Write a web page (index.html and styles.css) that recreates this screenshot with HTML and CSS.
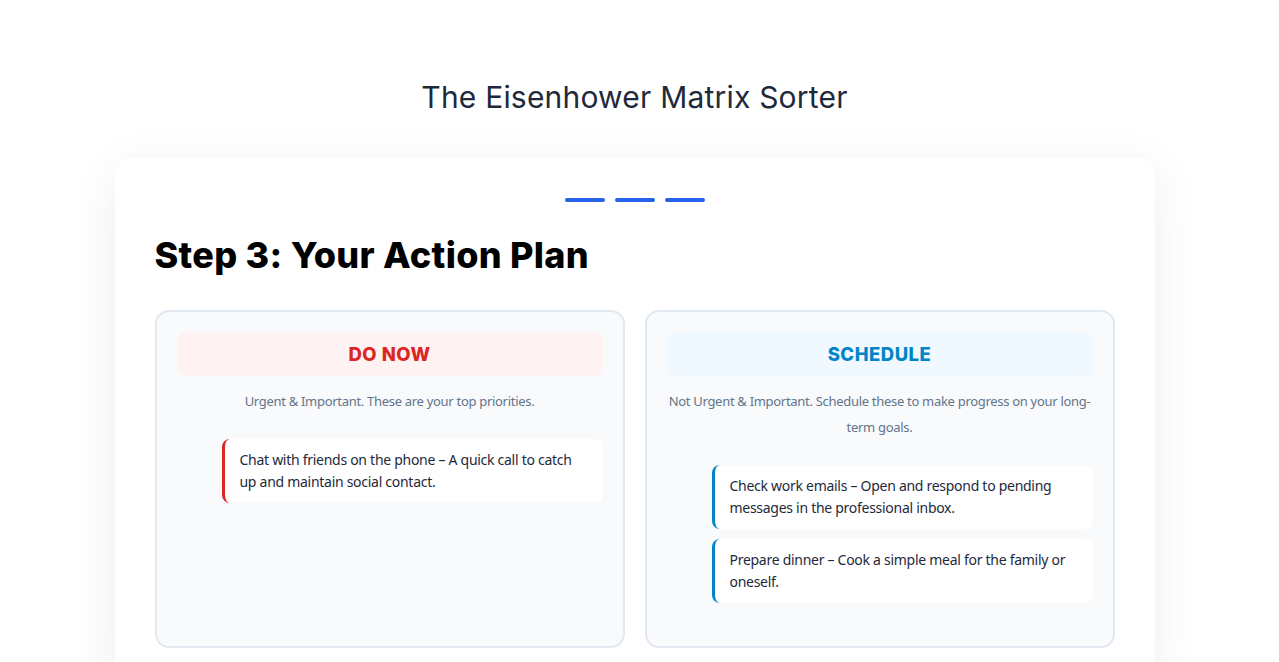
FILE: index.html
```html
<!DOCTYPE html>
<html lang="en">
<head>
<meta charset="utf-8">
<title>The Eisenhower Matrix Sorter</title>
<link rel="stylesheet" href="styles.css">
</head>
<body>
<main class="app">
  <h1 class="app-title">The Eisenhower Matrix Sorter</h1>
  <section class="card">
    <div class="progress">
      <span class="dash"></span>
      <span class="dash"></span>
      <span class="dash"></span>
    </div>
    <h2 class="step-title">Step 3: Your Action Plan</h2>
    <div class="matrix">
      <div class="quadrant quadrant-do">
        <div class="q-head"><h3 class="q-title">DO NOW</h3></div>
        <p class="q-desc">Urgent &amp; Important. These are your top priorities.</p>
        <ul class="task-list">
          <li class="task">Chat with friends on the phone – A quick call to catch up and maintain social contact.</li>
        </ul>
      </div>
      <div class="quadrant quadrant-schedule">
        <div class="q-head"><h3 class="q-title">SCHEDULE</h3></div>
        <p class="q-desc">Not Urgent &amp; Important. Schedule these to make progress on your long-term goals.</p>
        <ul class="task-list">
          <li class="task">Check work emails – Open and respond to pending messages in the professional inbox.</li>
          <li class="task">Prepare dinner – Cook a simple meal for the family or oneself.</li>
        </ul>
      </div>
    </div>
  </section>
</main>
</body>
</html>
```
FILE: styles.css
```css
* { box-sizing: border-box; }
html, body { margin: 0; padding: 0; overflow: hidden; }
body {
  background: #ffffff;
  font-family: "Noto Sans", "Open Sans", sans-serif;
  color: #1e293b;
  padding-right: 10px;
}
.app {
  max-width: 1040px;
  margin: 0 auto;
  padding-top: 79px;
}
.app-title {
  margin: 0 0 43px;
  text-align: center;
  font-family: "Inter", "Lato", sans-serif;
  font-weight: 400;
  font-size: 30px;
  line-height: 36px;
  letter-spacing: 0.2px;
  color: #1e293b;
}
.card {
  background: #ffffff;
  border-radius: 16px;
  box-shadow: 0 10px 50px rgba(15, 23, 42, 0.07);
  padding: 40px 40px 40px;
}
.progress {
  display: flex;
  justify-content: center;
  gap: 10px;
}
.dash {
  width: 40px;
  height: 4px;
  border-radius: 2px;
  background: #2563eb;
}
.step-title {
  margin: 30px 0 32px;
  font-family: "Inter", "Lato", sans-serif;
  font-weight: 800;
  font-size: 36px;
  line-height: 46px;
  letter-spacing: 0.3px;
  color: #000000;
}
.matrix {
  display: grid;
  grid-template-columns: 1fr 1fr;
  gap: 20px;
}
.quadrant {
  min-height: 338px;
  background: #f8fafc;
  border: 2px solid #e2e8f0;
  border-radius: 14px;
  padding: 20px;
}
.q-head {
  height: 44px;
  border-radius: 8px;
  display: flex;
  align-items: center;
  justify-content: center;
}
.q-title {
  margin: 0;
  font-family: "Inter", "Lato", sans-serif;
  font-weight: 800;
  font-size: 18.5px;
  letter-spacing: 0.5px;
}
.quadrant-do .q-head { background: #fef2f2; }
.quadrant-do .q-title { color: #dc2626; }
.quadrant-schedule .q-head { background: #f0f9ff; }
.quadrant-schedule .q-title { color: #0284c7; }
.q-desc {
  margin: 12px 0 25px;
  text-align: center;
  font-size: 13px;
  line-height: 26px;
  letter-spacing: -0.3px;
  color: #64748b;
}
.task-list {
  list-style: none;
  margin: 0 0 0 45px;
  padding: 0;
  display: flex;
  flex-direction: column;
  gap: 10px;
}
.task {
  background: #ffffff;
  border-left: 3px solid;
  border-radius: 8px;
  padding: 10px 16px 10px 15px;
  font-size: 14px;
  line-height: 22px;
  letter-spacing: -0.28px;
  color: #1e293b;
}
.quadrant-do .task { border-left-color: #dc2626; }
.quadrant-schedule .task { border-left-color: #0284c7; }
```
